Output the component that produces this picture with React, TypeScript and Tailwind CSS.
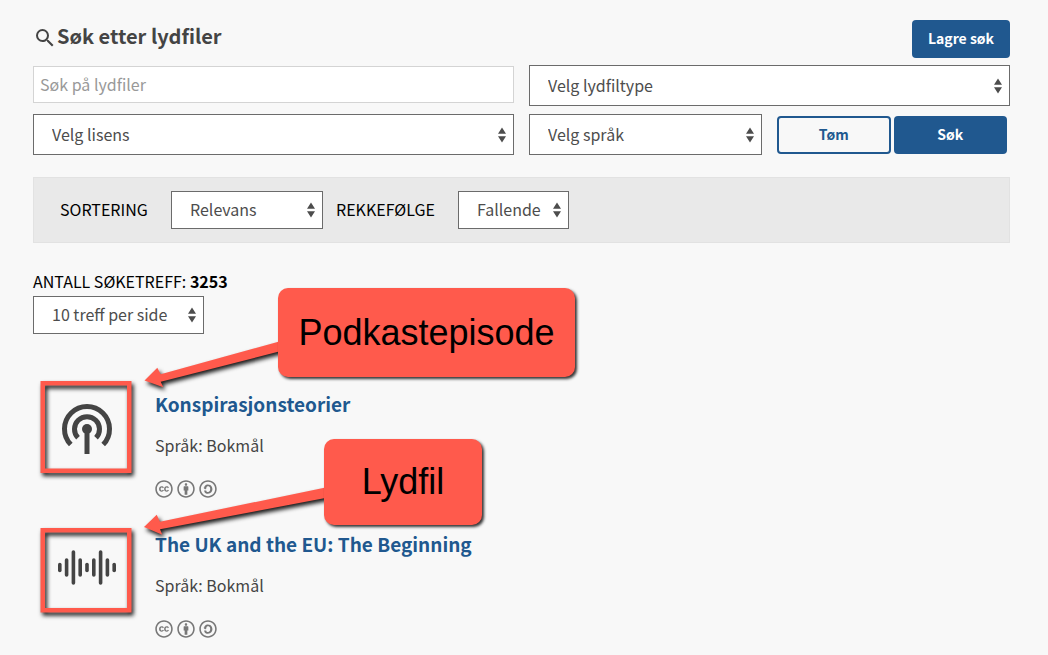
import React, { useState } from 'react';
import { MdSearch } from 'react-icons/md';
import { FaCreativeCommons, FaCreativeCommonsBy, FaCreativeCommonsSa } from 'react-icons/fa';

type SoundFile = { id: number; title: string; language: string; kind: 'podcast' | 'audio' };

const RESULTS: SoundFile[] = [
  { id: 1, title: 'Konspirasjonsteorier', language: 'Bokmål', kind: 'podcast' },
  { id: 2, title: 'The UK and the EU: The Beginning', language: 'Bokmål', kind: 'audio' },
];

const SelectField: React.FC<{ label: string; options: string[]; className?: string; id?: string }> = ({ label, options, className = '', id }) => (
  <div className={`relative ${className}`}>
    <select id={id} aria-label={id ? undefined : label} className="block h-full w-full appearance-none border border-[#6b6b6b] bg-white pr-6 pb-0.5 pl-[18px] text-base text-[#4d4d4d] outline-none">
      {options.map(o => <option key={o}>{o}</option>)}
    </select>
    <svg viewBox="0 0 8 16" className="pointer-events-none absolute top-1/2 right-2 h-4 w-2 -translate-y-1/2 fill-[#4d4d4d]">
      <path d="M4 0.5 8 6.7H0ZM4 15.5 0 9.3h8Z" />
    </svg>
  </div>
);

const PodcastIcon = () => (
  <svg viewBox="-26 -26 52 52" className="h-[52px] w-[52px] fill-none stroke-[#444]" strokeWidth="5">
    <path d="M-16.2 15.6A22.5 22.5 0 1 1 16.2 15.6" />
    <path d="M-9 8.8A12.5 12.5 0 1 1 9 8.8" />
    <circle r="5" className="fill-[#444] stroke-none" />
    <path d="M0 0V25" />
  </svg>
);

const WaveIcon = () => (
  <svg viewBox="0 0 60 52" className="h-[52px] w-[60px] stroke-[#444]" strokeWidth="3.6" strokeLinecap="round">
    {[6, 15, 31, 15, 6, 15, 31, 15, 6].map((h, i) => (
      <line key={i} x1={2.8 + i * 6.8} x2={2.8 + i * 6.8} y1={24.5 - h / 2} y2={24.5 + h / 2} />
    ))}
  </svg>
);

// Guide shapes pointing at the two result types
const Annotations = () => (
  <div className="pointer-events-none absolute top-0 left-0 font-['Liberation_Sans',sans-serif] text-4xl leading-10 text-black">
    <svg viewBox="0 0 340 640" className="h-[640px] w-[340px] fill-[#ff5a4c] drop-shadow-[2px_3px_2px_rgba(0,0,0,0.9)]">
      <path d="M144.5 380.5 157.3 367.7 160.7 374.3 282 340.8V350.8L160.7 381.7 163.3 387.3Z" />
      <path d="M144 527 156.7 514.7 160 521.7 328 487V497.5L160 529.3 162.3 534.7Z" />
      <path fillRule="evenodd" d="M40.5 381H131.500V473H40.500ZM45 385.500v83h82v-83Z" />
      <path fillRule="evenodd" d="M40.5 528H131.500V612.500H40.500ZM45 532.500v75.500h82v-75.500Z" />
    </svg>
    <div className="absolute top-[288px] left-[278px] flex h-[89px] w-[297px] items-center justify-center rounded-[10px] bg-[#ff5a4c] shadow-[2px_2px_3px_rgba(0,0,0,0.8)]">Podkastepisode</div>
    <div className="absolute top-[439px] left-[324px] flex h-[86px] w-[158px] items-center justify-center rounded-[10px] bg-[#ff5a4c] shadow-[2px_2px_3px_rgba(0,0,0,0.8)]">Lydfil</div>
  </div>
);

export default function App() {
  const [query, setQuery] = useState('');

  return (
    <main className="relative min-h-screen bg-[#f8f8f8] pt-5 pr-[38px] pb-4 pl-[33px] font-['Noto_Sans_CJK_SC',sans-serif] text-base leading-7 text-black">
      <form onSubmit={e => e.preventDefault()}>
        <div className="mb-[7px] flex h-[38px] items-start justify-between">
          <h1 className="flex items-center text-xl leading-8 font-bold text-[#444]">
            <MdSearch className="mt-1 h-6 w-6" />
            Søk etter lydfiler
          </h1>
          <button type="button" className="h-[38px] w-[98px] rounded bg-[#20588f] pb-0.5 text-sm font-bold text-white">Lagre søk</button>
        </div>
        <div className="grid grid-cols-2 gap-x-[15px] gap-y-2">
          <input type="text" aria-label="Søk på lydfiler" placeholder="Søk på lydfiler" value={query} onChange={e => setQuery(e.target.value)} className="mt-px h-[37px] w-full border border-[#d4d4d4] bg-white px-1.5 pb-0.5 text-base text-[#444] outline-none placeholder:text-[#999]" />
          <SelectField label="Lydfiltype" options={['Velg lydfiltype', 'Podkast', 'Lydfil']} className="h-[41px]" />
          <SelectField label="Lisens" options={['Velg lisens']} className="h-[41px]" />
          <div className="grid grid-cols-2 gap-x-[15px]">
            <SelectField label="Språk" options={['Velg språk', 'Bokmål', 'Nynorsk', 'Engelsk']} className="h-[41px]" />
            <div className="grid grid-cols-2 items-center gap-[3px] pr-[3px]">
              <button type="button" onClick={() => setQuery('')} className="h-[38px] rounded border-2 border-[#20588f] pb-0.5 text-sm font-bold text-[#20588f]">Tøm</button>
              <button type="submit" className="h-[38px] rounded bg-[#20588f] pb-0.5 text-sm font-bold text-white">Søk</button>
            </div>
          </div>
        </div>
      </form>

      <div className="mt-[22px] flex h-[66px] items-center border border-[#e2e2e2] bg-[#e9e9e9] pl-[26px]">
        <label htmlFor="sort" className="w-[111px] pb-0.5">SORTERING</label>
        <SelectField id="sort" label="Sortering" options={['Relevans', 'Tittel', 'Dato']} className="h-[38px] w-[152px]" />
        <label htmlFor="order" className="ml-[13px] w-[122px] pb-0.5">REKKEFØLGE</label>
        <SelectField id="order" label="Rekkefølge" options={['Fallende', 'Stigende']} className="h-[38px] w-[111px]" />
      </div>

      <p className="mt-6 mb-px">ANTALL SØKETREFF: <strong>3253</strong></p>
      <SelectField label="Treff per side" options={['10 treff per side', '20 treff per side', '50 treff per side']} className="h-[38px] w-[171px]" />

      <ul className="mt-14 flex flex-col gap-8">
        {RESULTS.map(r => (
          <li key={r.id} className="flex">
            <div className="flex w-[107px] shrink-0 justify-center pt-[13px]">
              {r.kind === 'podcast' ? <PodcastIcon /> : <WaveIcon />}
            </div>
            <div className="pl-[15px]">
              <h2 className="text-[19px] leading-7 font-bold text-[#20588f]"><a href="#">{r.title}</a></h2>
              <p className="mt-[13px] text-[#444]">Språk: {r.language}</p>
              <div className="mt-[21px] flex gap-1 text-lg text-[#777]">
                <FaCreativeCommons />
                <FaCreativeCommonsBy />
                <FaCreativeCommonsSa />
              </div>
            </div>
          </li>
        ))}
      </ul>

      <Annotations />
    </main>
  );
}
